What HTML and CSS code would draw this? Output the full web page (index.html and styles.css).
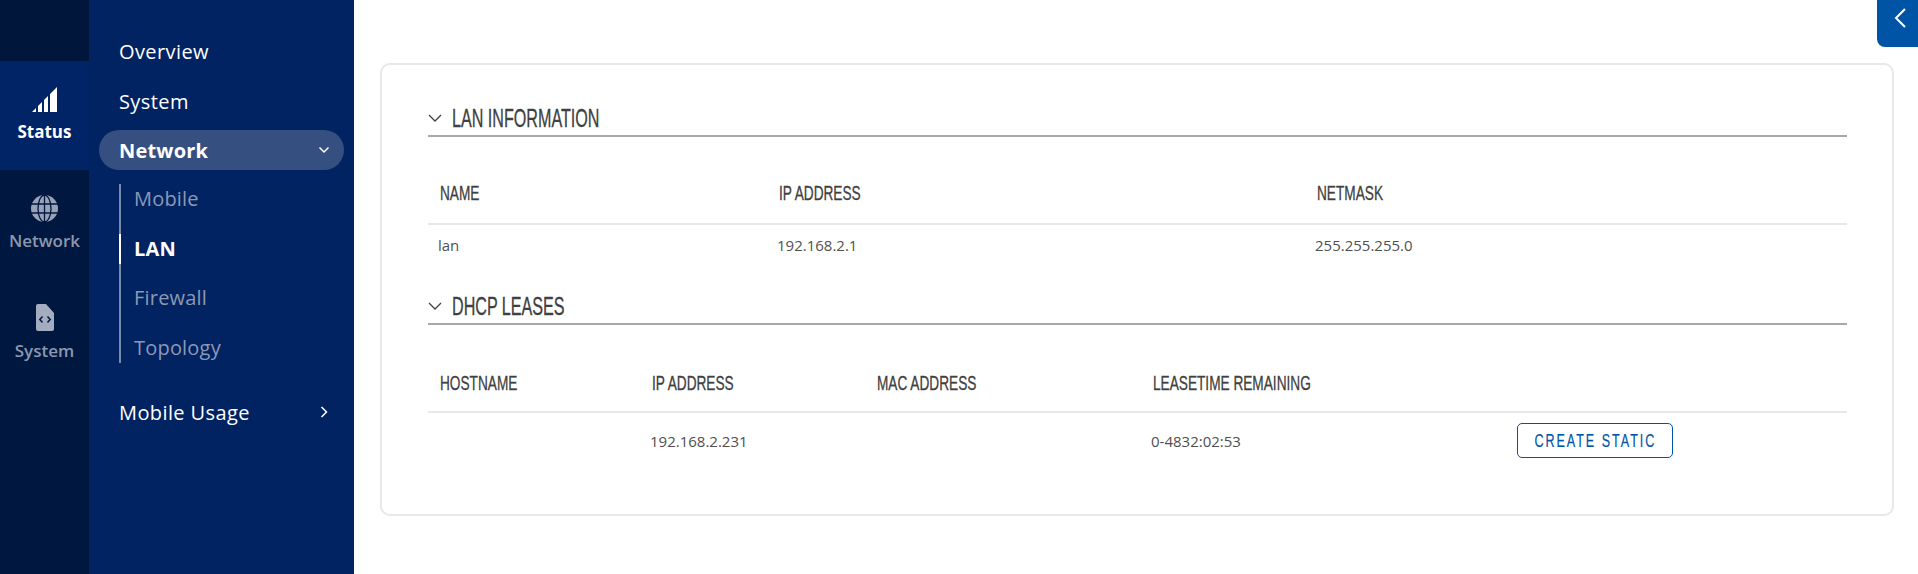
FILE: index.html
```html
<!DOCTYPE html>
<html>
<head>
<meta charset="UTF-8">
<title>LAN</title>
<link rel="stylesheet" href="styles.css">
</head>
<body>
<div class="rail">
	<div class="rail-top"></div>
	<div class="rail-item rail-active">
		<svg class="rail-icon" width="25" height="25" viewBox="0 0 25 25">
			<path d="M0 25 L4 21 V25 Z M6 25 V19 L10 15 V25 Z M12 25 V13 L16 9 V25 Z M18 25 V7 L25 0 V25 Z" fill="#fff"/>
		</svg>
		<span>Status</span>
	</div>
	<div class="rail-item">
		<svg class="rail-icon" width="27" height="27" viewBox="0 0 27 27">
			<circle cx="13.5" cy="13.5" r="13.5" fill="#98a3b8"/>
			<g fill="none" stroke="#00173f" stroke-width="1.3">
				<ellipse cx="13.5" cy="13.5" rx="6.5" ry="13.5"/>
				<path d="M13.5 0 V27 M0 9 H27 M0 18 H27"/>
			</g>
		</svg>
		<span>Network</span>
	</div>
	<div class="rail-item rail-last">
		<svg class="rail-icon" width="18" height="27" viewBox="0 0 18 27">
			<path d="M2 0 H10 L18 9 V25 Q18 27 16 27 H2 Q0 27 0 25 V2 Q0 0 2 0 Z" fill="#a3adbf"/>
			<path d="M6.5 12.5 L3.8 15.5 L6.5 18.5 M11.5 12.5 L14.2 15.5 L11.5 18.5" fill="none" stroke="#00173f" stroke-width="1.5"/>
		</svg>
		<span>System</span>
	</div>
</div>

<div class="nav">
	<div class="nav-item">Overview</div>
	<div class="nav-item">System</div>
	<div class="nav-item nav-open">Network
		<svg width="12" height="8" viewBox="0 0 12 8"><path d="M1.5 1.5 L6 6 L10.5 1.5" fill="none" stroke="#fff" stroke-width="1.5"/></svg>
	</div>
	<div class="sub-list">
		<div class="sub-item">Mobile</div>
		<div class="sub-item sub-active">LAN</div>
		<div class="sub-item">Firewall</div>
		<div class="sub-item">Topology</div>
	</div>
	<div class="nav-item nav-usage">Mobile Usage
		<svg width="8" height="12" viewBox="0 0 8 12"><path d="M1.5 1 L6.5 6 L1.5 11" fill="none" stroke="#fff" stroke-width="1.5"/></svg>
	</div>
</div>

<div class="main">
	<div class="card">
		<div class="section-title">
			<svg width="14" height="8" viewBox="0 0 14 8"><path d="M1 1 L7 7 L13 1" fill="none" stroke="#404040" stroke-width="1.3"/></svg>
			<h3><span class="narrow">LAN INFORMATION</span></h3>
		</div>
		<table class="lan-table">
			<tr><th class="c-name"><span class="narrow">NAME</span></th><th class="c-ip"><span class="narrow">IP ADDRESS</span></th><th><span class="narrow">NETMASK</span></th></tr>
			<tr><td>lan</td><td>192.168.2.1</td><td>255.255.255.0</td></tr>
		</table>

		<div class="section-title section-second">
			<svg width="14" height="8" viewBox="0 0 14 8"><path d="M1 1 L7 7 L13 1" fill="none" stroke="#404040" stroke-width="1.3"/></svg>
			<h3><span class="narrow">DHCP LEASES</span></h3>
		</div>
		<table class="dhcp-table">
			<tr><th class="c-host"><span class="narrow">HOSTNAME</span></th><th class="c-addr"><span class="narrow">IP ADDRESS</span></th><th class="c-mac"><span class="narrow">MAC ADDRESS</span></th><th class="c-lease"><span class="narrow">LEASETIME REMAINING</span></th><th></th></tr>
			<tr><td></td><td>192.168.2.231</td><td></td><td>0-4832:02:53</td><td><a class="btn"><span class="btn-text">CREATE STATIC</span></a></td></tr>
		</table>
	</div>
</div>

<div class="toggle">
	<svg width="14" height="20" viewBox="0 0 14 20"><path d="M12 1 L3 10 L12 19" fill="none" stroke="#fff" stroke-width="2"/></svg>
</div>
</body>
</html>
```

FILE: styles.css
```css
html, body {
	margin: 0;
	height: 574px;
	overflow: hidden;
}

body {
	display: flex;
	font-family: 'Open Sans', 'Noto Sans', sans-serif;
	background-color: #fff;
	color: #404040;
}

/* left icon column */
.rail {
	width: 89px;
	flex-shrink: 0;
	background-color: #00173f;
}

.rail-top {
	height: 61px;
	background-color: #00163a;
}

.rail-item {
	height: 109px;
	box-sizing: border-box;
	padding-top: 25px;
	display: flex;
	flex-direction: column;
	align-items: center;
	font-size: 17px;
	font-weight: 600;
	line-height: 20px;
	color: #8c98ae;
}

.rail-icon {
	margin-bottom: 9px;
}

.rail-active {
	padding-top: 26px;
	background-color: #012466;
	color: #fff;
	font-weight: 700;
}

.rail-active .rail-icon,
.rail-last .rail-icon {
	margin-bottom: 10px;
}

/* second level menu */
.nav {
	width: 265px;
	flex-shrink: 0;
	box-sizing: border-box;
	padding: 26px 10px 0 10px;
	background-color: #012362;
}

.nav-item {
	height: 50px;
	padding: 0 16px 0 20px;
	display: flex;
	align-items: center;
	justify-content: space-between;
	color: #fff;
	font-size: 20px;
	letter-spacing: 0.4px;
}

.nav-open {
	height: 40px;
	margin-top: 4px;
	padding-right: 14px;
	border-radius: 20px;
	background-color: #354f80;
	font-weight: 700;
	letter-spacing: 0.2px;
}

.nav-usage {
	margin-top: 24px;
}

.sub-list {
	margin: 14px 0 0 20px;
	border-left: 2px solid #7a8aa9;
	display: flex;
	flex-direction: column;
	gap: 19.7px;
}

.sub-item {
	height: 30px;
	box-sizing: border-box;
	padding: 0 0 2px 13px;
	display: flex;
	align-items: center;
	margin-left: -2px;
	border-left: 2px solid transparent;
	font-size: 20px;
	letter-spacing: 0.2px;
	color: #8c99b4;
}

.sub-active {
	padding-bottom: 0;
	border-left-color: #fff;
	color: #fff;
	font-weight: 700;
}

/* page content */
.main {
	flex: 1;
	padding: 63px 24px 0 26px;
}

.card {
	height: 453px;
	box-sizing: border-box;
	padding: 26px 45px 0 46px;
	border: 2px solid #e8e8e8;
	border-radius: 10px;
}

.section-title {
	height: 46px;
	box-sizing: border-box;
	padding-top: 10px;
	display: flex;
	align-items: center;
	gap: 10px;
	border-bottom: 2px solid #a8a8a8;
}

.section-second {
	margin-top: 15px;
}

.section-title h3,
th,
.btn {
	font-family: 'Liberation Sans', sans-serif;
	font-weight: 400;
}

/* no condensed font here, so squeeze the regular one */
.narrow {
	display: inline-block;
	transform: scaleX(0.65);
	transform-origin: left center;
	-webkit-text-stroke: 0.3px #404040;
	white-space: nowrap;
}

.section-title h3 {
	margin: 0;
	font-size: 26px;
	line-height: 30px;
	color: #404040;
}

.section-title .narrow {
	transform: scaleX(0.62);
}

table {
	width: 100%;
	border-collapse: collapse;
	table-layout: fixed;
	margin-top: 22px;
}

th {
	height: 65px;
	box-sizing: border-box;
	padding: 4px 12px 0 12px;
	text-align: left;
	font-size: 21px;
	color: #404040;
	border-bottom: 2px solid #e8e8e8;
}

.dhcp-table th {
	padding-top: 7px;
}

td {
	box-sizing: border-box;
	padding: 0 10px;
	font-size: 15px;
	color: #505050;
}

.lan-table td {
	height: 40px;
}

.dhcp-table td {
	height: 56px;
}

.c-name { width: 339px; }
.c-ip { width: 538px; }
.c-host { width: 212px; }
.c-addr { width: 225px; }
.c-mac { width: 276px; }
.c-lease { width: 365px; }

.btn {
	display: flex;
	justify-content: center;
	width: 156px;
	height: 35px;
	margin-left: 1px;
	box-sizing: border-box;
	border: 1px solid #0054a6;
	border-radius: 5px;
	font-size: 19px;
	line-height: 33px;
	letter-spacing: 3px;
	color: #0054a6;
}

.btn-text {
	display: inline-block;
	transform: scaleX(0.66);
	-webkit-text-stroke: 0.2px #0054a6;
	white-space: nowrap;
}

/* collapse button, top right */
.toggle {
	position: absolute;
	top: 0;
	right: 0;
	width: 41px;
	height: 47px;
	box-sizing: border-box;
	padding: 8px 0 0 5px;
	display: flex;
	justify-content: center;
	background-color: #0054a6;
	border-bottom-left-radius: 8px;
}
```
